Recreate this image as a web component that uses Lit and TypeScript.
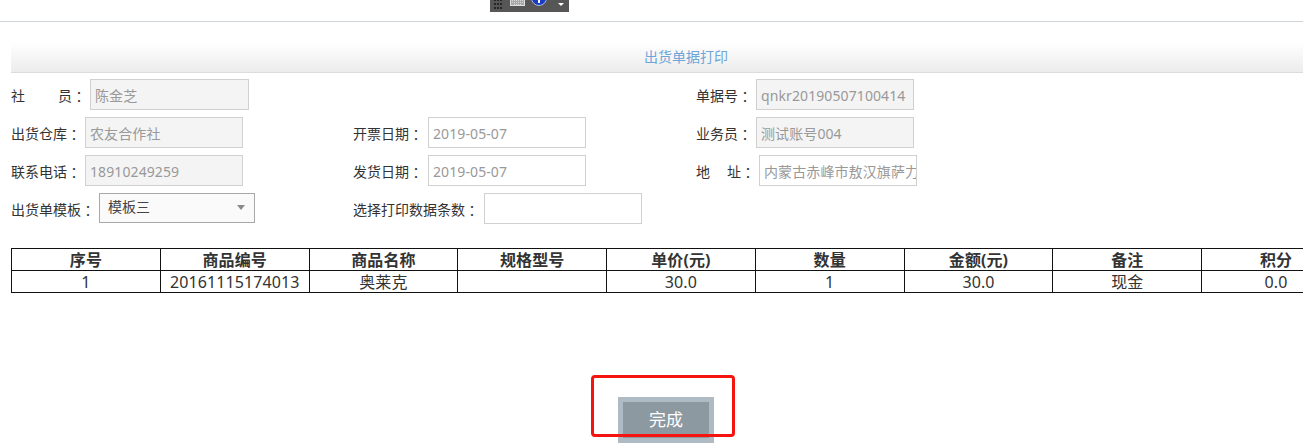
import { LitElement, html, css } from "lit";
import { customElement } from "lit/decorators.js";

@customElement("app-root")
export class AppRoot extends LitElement {
  static styles = css`
    :host {
      display: block;
      position: relative;
      height: 447px;
      overflow: hidden;
      background: #fff;
      font-family: "Noto Sans", "Noto Sans CJK SC", sans-serif;
      font-size: 14px;
      color: #333;
    }
    .topbar {
      height: 21px;
      border-bottom: 1px solid #cfd4d8;
    }
    .toolbar {
      position: absolute;
      left: 490px;
      top: 0;
      width: 79px;
      height: 12px;
      background: #565656;
    }
    .toolbar svg { display: block; }
    .main { padding: 20px 0 0 11px; }
    .title {
      width: 1350px;
      height: 31px;
      box-sizing: border-box;
      border-bottom: 1px solid #dcdcdc;
      background: linear-gradient(#ffffff, #ececec);
      color: #6ea6d8;
      text-align: center;
      font-size: 14px;
      line-height: 30px;
    }
    .form {
      display: grid;
      grid-template-columns: 342px 343px 1fr;
      grid-auto-rows: 38px;
      margin-top: 6px;
    }
    .cell { display: flex; align-items: flex-start; }
    .label {
      white-space: nowrap;
      line-height: 33px;
      height: 31px;
      color: #333;
    }
    .colon { font-family: "Noto Sans CJK TC", sans-serif; vertical-align: -1px; }
    .gap-wide { display: inline-block; width: 33px; }
    .gap-narrow { display: inline-block; width: 17px; }
    .field {
      box-sizing: border-box;
      width: 158px;
      height: 31px;
      border: 1px solid #d0d0d0;
      background: #fff;
      color: #999;
      padding: 0 4px;
      line-height: 31px;
      white-space: nowrap;
      overflow: hidden;
      letter-spacing: 0.1px;
    }
    .field.ro { background: #f4f4f4; }
    .field.wide { width: 159px; }
    .select {
      box-sizing: border-box;
      width: 156px;
      height: 30px;
      border: 1px solid #a8a8a8;
      background: #fafafa;
      color: #444;
      padding: 0 8px 2px;
      line-height: 26px;
      display: flex;
      justify-content: space-between;
      align-items: center;
    }
    .arrow {
      width: 0;
      height: 0;
      border-left: 4px solid transparent;
      border-right: 4px solid transparent;
      border-top: 5px solid #8a8a8a;
      margin: 0 1px 0 0;
    }
    .grid {
      border-collapse: collapse;
      table-layout: fixed;
      width: 1340px;
      margin-top: 17px;
      font-size: 16px;
      color: #333;
    }
    .grid th, .grid td {
      border: 1px solid #111;
      padding: 2px 0 0;
      height: 19px;
      line-height: 19px;
      text-align: center;
      font-weight: 400;
      letter-spacing: 0.1px;
    }
    .grid th { font-weight: 700; }
    .done {
      position: absolute;
      left: 618px;
      top: 397px;
      box-sizing: border-box;
      width: 96px;
      height: 46px;
      border: 5px solid #aebbc4;
      background: #8c99a1;
      color: #fff;
      font-size: 17px;
      line-height: 36px;
      text-align: center;
    }
    .mark {
      position: absolute;
      left: 591px;
      top: 375px;
      width: 144px;
      height: 62px;
      box-sizing: border-box;
      border: 3px solid #f5140f;
      border-radius: 4px;
    }
  `;

  private field(value: string, cls = "") {
    return html`<div class="field ${cls}">${value}</div>`;
  }

  private label(text: unknown, width: number) {
    return html`<span class="label" style="width:${width}px">${text}<span class="colon">：</span></span>`;
  }

  render() {
    const heads = ["序号", "商品编号", "商品名称", "规格型号", "单价(元)", "数量", "金额(元)", "备注", "积分"];
    const row = ["1", "20161115174013", "奥莱克", "", "30.0", "1", "30.0", "现金", "0.0"];
    return html`
      <div class="topbar"></div>
      <div class="toolbar">
        <svg width="79" height="12" viewBox="0 0 79 12">
          <g fill="#262626">
            <rect x="4" y="0" width="2" height="1"/><rect x="7" y="0" width="2" height="1"/><rect x="10" y="0" width="2" height="1"/>
            <rect x="4" y="3" width="2" height="2"/><rect x="7" y="3" width="2" height="2"/><rect x="10" y="3" width="2" height="2"/>
            <rect x="4" y="7" width="2" height="2"/><rect x="7" y="7" width="2" height="2"/><rect x="10" y="7" width="2" height="2"/>
          </g>
          <rect x="20.5" y="-2.5" width="14" height="8" fill="#a8a8a8" stroke="#e0e0e0"/>
          <path d="M22 0.5h11M22 2.5h11M24 4.5h7" stroke="#d6d6d6" stroke-width="1" stroke-dasharray="1 1"/>
          <circle cx="49" cy="-2" r="7.5" fill="#1a3cc0" stroke="#aab6d8"/>
          <rect x="48" y="0" width="2" height="3" fill="#fff"/>
          <path d="M68 3h6l-3 3z" fill="#fff"/>
        </svg>
      </div>
      <div class="main">
        <div class="title">出货单据打印</div>
        <div class="form">
          <div class="cell">${this.label(html`社<span class="gap-wide"></span>员`, 79)}${this.field("陈金芝", "ro wide")}</div>
          <div class="cell"></div>
          <div class="cell">${this.label("单据号", 60)}${this.field("qnkr20190507100414", "ro")}</div>

          <div class="cell">${this.label("出货仓库", 74)}${this.field("农友合作社", "ro")}</div>
          <div class="cell">${this.label("开票日期", 75)}${this.field("2019-05-07")}</div>
          <div class="cell">${this.label("业务员", 60)}${this.field("测试账号004", "ro")}</div>

          <div class="cell">${this.label("联系电话", 74)}${this.field("18910249259", "ro")}</div>
          <div class="cell">${this.label("发货日期", 75)}${this.field("2019-05-07")}</div>
          <div class="cell">${this.label(html`地<span class="gap-narrow"></span>址`, 63)}${this.field("内蒙古赤峰市敖汉旗萨力")}</div>

          <div class="cell">
            ${this.label("出货单模板", 88)}
            <div class="select"><span>模板三</span><i class="arrow"></i></div>
          </div>
          <div class="cell">${this.label("选择打印数据条数", 131)}${this.field("")}</div>
          <div class="cell"></div>
        </div>
        <table class="grid">
          <tr>${heads.map((h) => html`<th>${h}</th>`)}</tr>
          <tr>${row.map((c) => html`<td>${c}</td>`)}</tr>
        </table>
      </div>
      <div class="done">完成</div>
      <div class="mark"></div>
    `;
  }
}
